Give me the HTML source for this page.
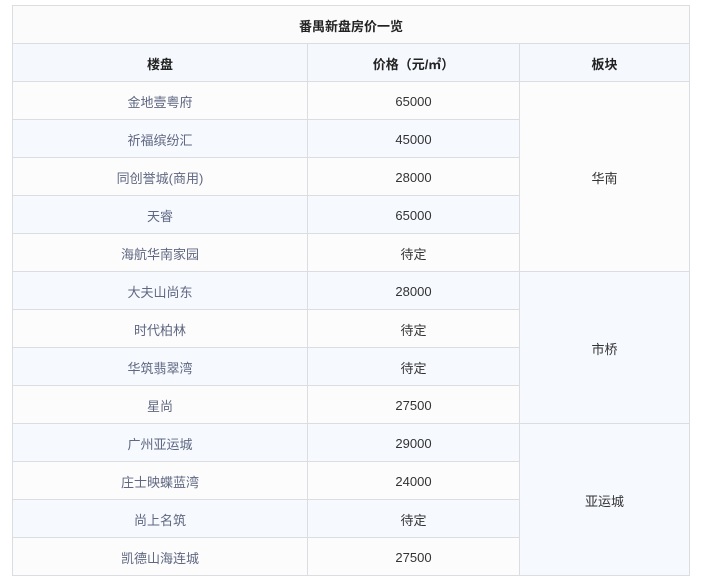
<!DOCTYPE html>
<html><head><meta charset="utf-8"><style>
body{margin:0;background:#fff;font-family:"Liberation Sans","Noto Sans CJK SC",sans-serif;}
table{position:absolute;left:12px;top:5px;width:677px;border-collapse:collapse;table-layout:fixed;font-size:13px;}
td,th{border:1px solid #dcdde0;height:37px;padding:2px 0 0 0;box-sizing:border-box;text-align:center;color:#333;}
th{font-weight:bold;color:#222;}
tr.t th{background:#fbfbfc;}
tr.h th{background:#f5f9fe;}
tr.a td{background:#fcfcfc;}
tr.b td{background:#f6f9fe;}
td.n{color:#5f6782;}
td.w{background:#fcfcfc !important;}
td.bl{background:#f6f9fe !important;}
</style></head><body>
<table>
<colgroup><col style="width:295px"><col style="width:212px"><col style="width:170px"></colgroup>
<tr class="t"><th colspan="3" style="height:38px">番禺新盘房价一览</th></tr>
<tr class="h"><th style="height:38px">楼盘</th><th>价格（元/㎡）</th><th>板块</th></tr>
<tr class="a"><td class="n" style="height:38px">金地壹粤府</td><td>65000</td><td rowspan="5" class="w">华南</td></tr>
<tr class="b"><td class="n" style="height:38px">祈福缤纷汇</td><td>45000</td></tr>
<tr class="a"><td class="n" style="height:38px">同创誉城(商用)</td><td>28000</td></tr>
<tr class="b"><td class="n" style="height:38px">天睿</td><td>65000</td></tr>
<tr class="a"><td class="n" style="height:38px">海航华南家园</td><td>待定</td></tr>
<tr class="b"><td class="n" style="height:38px">大夫山尚东</td><td>28000</td><td rowspan="4" class="bl">市桥</td></tr>
<tr class="a"><td class="n" style="height:38px">时代柏林</td><td>待定</td></tr>
<tr class="b"><td class="n" style="height:38px">华筑翡翠湾</td><td>待定</td></tr>
<tr class="a"><td class="n" style="height:38px">星尚</td><td>27500</td></tr>
<tr class="b"><td class="n" style="height:38px">广州亚运城</td><td>29000</td><td rowspan="4" class="bl">亚运城</td></tr>
<tr class="a"><td class="n" style="height:38px">庄士映蝶蓝湾</td><td>24000</td></tr>
<tr class="b"><td class="n" style="height:38px">尚上名筑</td><td>待定</td></tr>
<tr class="a"><td class="n" style="height:38px">凯德山海连城</td><td>27500</td></tr>
</table>
</body></html>
